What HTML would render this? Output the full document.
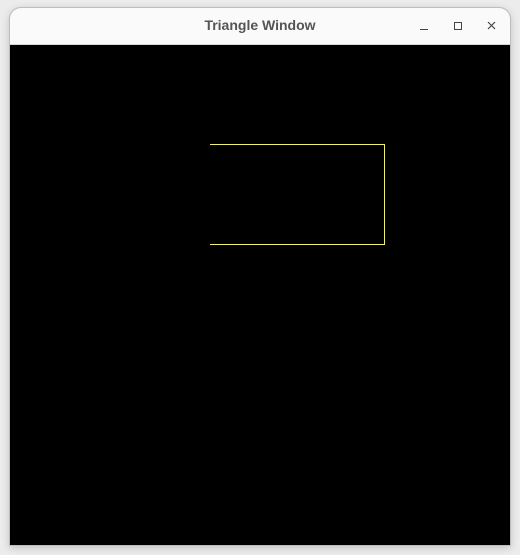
<!DOCTYPE html>
<html><head><style>
html,body{margin:0;padding:0;width:520px;height:555px;background:#ececec;overflow:hidden}
.win{position:absolute;left:9px;top:7px;width:502px;height:539px;background:#bdbdbd;border-radius:12px 12px 0 0;box-shadow:0 2px 8px rgba(0,0,0,.18)}
.tb{position:absolute;left:10px;top:8px;width:500px;height:36px;background:#fafafa;border-radius:11px 11px 0 0;border-bottom:1px solid #d6d6d6}
.title{position:absolute;left:0;right:0;top:9px;text-align:center;font:bold 14px "Liberation Sans",sans-serif;color:#555}
.c{position:absolute;left:10px;top:45px;width:500px;height:500px;background:#000}
</style></head><body>
<div class="win"></div>
<div class="tb"><div class="title">Triangle Window</div>
<svg style="position:absolute;left:0;top:0" width="500" height="36">
<line x1="410" y1="21.5" x2="418" y2="21.5" stroke="#444" stroke-width="1"/>
<rect x="444.5" y="14.5" width="7" height="7" fill="none" stroke="#444"/>
<path d="M478 14 L485 21 M485 14 L478 21" stroke="#444" stroke-width="1.2"/>
</svg></div>
<div class="c"></div>
<svg style="position:absolute;left:0;top:0" width="520" height="555">
<path d="M210 144.5 H384.5 V244.5 H210" fill="none" stroke="#ffff00" stroke-width="1"/>
</svg>
</body></html>
